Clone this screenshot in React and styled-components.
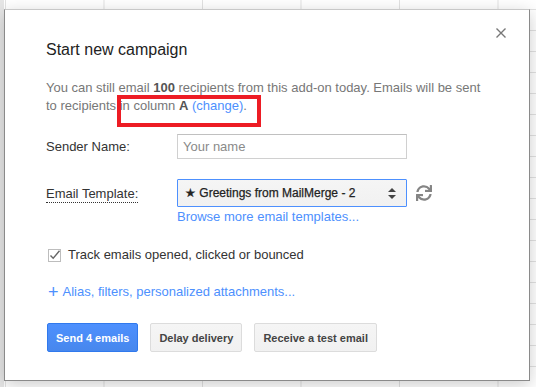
import React from "react";
import styled, { createGlobalStyle } from "styled-components";
import { FaSync } from "react-icons/fa";

const GlobalStyle = createGlobalStyle`
  html, body {
    margin: 0;
    padding: 0;
    width: 536px;
    height: 387px;
    overflow: hidden;
  }
  body {
    font-family: "Liberation Sans", Arial, sans-serif;
    background: #fff;
  }
`;

const Sheet = styled.div`
  width: 536px;
  height: 387px;
  box-sizing: border-box;
  padding: 9px 6px 0 4px;
  background-color: #fff;
  background-image:
    linear-gradient(to right, #e6e6e6 0, #e6e6e6 4px, transparent 4px),
    linear-gradient(to right, #e2e2e2 1px, transparent 1px),
    linear-gradient(to bottom, #e2e2e2 1px, transparent 1px);
  background-size: 100% 100%, 98.5px 100%, 100% 21px;
  background-position: 0 0, 5px 0, 0 9px;
  background-repeat: no-repeat, repeat, repeat;
`;

const Dialog = styled.div`
  position: relative;
  width: 526px;
  height: 372px;
  box-sizing: border-box;
  background: #fff;
  border: 1px solid #8a8a8a;
  border-top-color: #c8c8c8;
  box-shadow: 0 4px 16px rgba(0, 0, 0, 0.2);
  padding: 30px 40px 0 41px;
  display: flex;
  flex-direction: column;
`;

const Close = styled.button`
  position: absolute;
  top: 18px;
  right: 23px;
  width: 10px;
  height: 10px;
  padding: 0;
  border: none;
  background: none;
  cursor: pointer;
  display: flex;
`;

const Title = styled.h1`
  margin: 0;
  font-size: 16px;
  line-height: 20px;
  font-weight: normal;
  color: #222;
`;

const Intro = styled.p`
  position: relative;
  margin: 19px 0 0;
  font-size: 13px;
  line-height: 18px;
  color: #777;

  b {
    color: #555;
  }
`;

const Highlight = styled.span`
  position: absolute;
  left: 71px;
  top: 16px;
  width: 144px;
  height: 32px;
  box-sizing: border-box;
  border: 4px solid #ed1c24;
  pointer-events: none;
`;

const Link = styled.a`
  color: #4d90fe;
  text-decoration: none;
  cursor: pointer;
`;

const FieldRow = styled.div`
  display: flex;
  align-items: center;
  margin-top: ${(p) => p.$gap}px;
`;

const Label = styled.label`
  width: 131px;
  flex: none;
  font-size: 13px;
  color: #333;
`;

const Dotted = styled.span`
  border-bottom: 1px dotted #333;
  padding-bottom: 1px;
`;

const TextInput = styled.input`
  width: 230px;
  height: 25px;
  box-sizing: border-box;
  border: 1px solid #d0d0d0;
  border-top-color: #c0c0c0;
  padding: 0 5px;
  font-family: inherit;
  font-size: 13px;
  color: #333;
  outline: none;
  &::placeholder {
    color: #8a8a8a;
  }
`;

const SelectBox = styled.div`
  width: 230px;
  height: 28px;
  box-sizing: border-box;
  border: 1px solid #4d90fe;
  border-radius: 1px;
  background: linear-gradient(#f5f5f5, #f1f1f1);
  display: flex;
  align-items: center;
  padding: 0 10px 0 7px;
  font-size: 12px;
  color: #222;
  -webkit-text-stroke: 0.25px #222;
`;

const SelectText = styled.span`
  flex: 1;
  white-space: nowrap;
`;

const Refresh = styled(FaSync)`
  margin-left: 9px;
  font-size: 16px;
  color: #858585;
`;

const SubLink = styled(Link)`
  display: block;
  margin: 2px 0 0 131px;
  font-size: 13px;
  line-height: 16px;
`;

const CheckRow = styled.label`
  display: flex;
  align-items: center;
  gap: 7px;
  margin-top: 21px;
  margin-left: 2px;
  font-size: 13px;
  line-height: 18px;
  color: #333;
`;

const MoreLink = styled(Link)`
  display: flex;
  align-items: center;
  gap: 4px;
  margin-top: 19px;
  margin-left: 2px;
  font-size: 13px;
  line-height: 18px;
`;

const Plus = styled.span`
  font-size: 18px;
  line-height: 18px;
`;

const Buttons = styled.div`
  display: flex;
  gap: 12px;
  margin-top: 22px;
  margin-left: 1px;
`;

const Button = styled.button`
  height: 29px;
  padding: 0 8px;
  min-width: 72px;
  border-radius: 2px;
  font-family: inherit;
  font-size: 11px;
  font-weight: bold;
  cursor: pointer;
  border: 1px solid ${(p) => (p.$primary ? "#3079ed" : "#dcdcdc")};
  background: ${(p) =>
    p.$primary
      ? "linear-gradient(#4d90fe, #4787ed)"
      : "linear-gradient(#f5f5f5, #f1f1f1)"};
  color: ${(p) => (p.$primary ? "#fff" : "#444")};
`;

const CloseIcon = () => (
  <svg width="10" height="10" viewBox="0 0 10 10">
    <path d="M0.5 0.5 L9.5 9.5 M9.5 0.5 L0.5 9.5" stroke="#777" strokeWidth="1.4" />
  </svg>
);

const Arrows = () => (
  <svg width="8" height="11" viewBox="0 0 8 11">
    <path d="M4 0 L8 4 H0 Z M0 7 H8 L4 11 Z" fill="#444" />
  </svg>
);

const CheckIcon = () => (
  <svg width="13" height="13" viewBox="0 0 13 13">
    <rect x="0.5" y="0.5" width="12" height="12" fill="#fff" stroke="#bdbdbd" />
    <path d="M2.5 6.5 L5.2 9.3 L11.5 1.8" fill="none" stroke="#666" strokeWidth="1.4" />
  </svg>
);

export default function App() {
  return (
    <>
      <GlobalStyle />
      <Sheet>
        <Dialog>
          <Close aria-label="Close">
            <CloseIcon />
          </Close>
          <Title>Start new campaign</Title>
          <Intro>
            You can still email <b>100</b> recipients from this add-on today.
            Emails will be sent to recipients in column <b>A</b>{" "}
            <Link>(change)</Link>.
            <Highlight />
          </Intro>
          <FieldRow $gap={19}>
            <Label>Sender Name:</Label>
            <TextInput placeholder="Your name" />
          </FieldRow>
          <FieldRow $gap={20}>
            <Label>
              <Dotted>Email Template:</Dotted>
            </Label>
            <SelectBox>
              <SelectText>★ Greetings from MailMerge - 2</SelectText>
              <Arrows />
            </SelectBox>
            <Refresh />
          </FieldRow>
          <SubLink>Browse more email templates...</SubLink>
          <CheckRow>
            <CheckIcon />
            Track emails opened, clicked or bounced
          </CheckRow>
          <MoreLink>
            <Plus>+</Plus>
            Alias, filters, personalized attachments...
          </MoreLink>
          <Buttons>
            <Button $primary>Send 4 emails</Button>
            <Button>Delay delivery</Button>
            <Button>Receive a test email</Button>
          </Buttons>
        </Dialog>
      </Sheet>
    </>
  );
}
